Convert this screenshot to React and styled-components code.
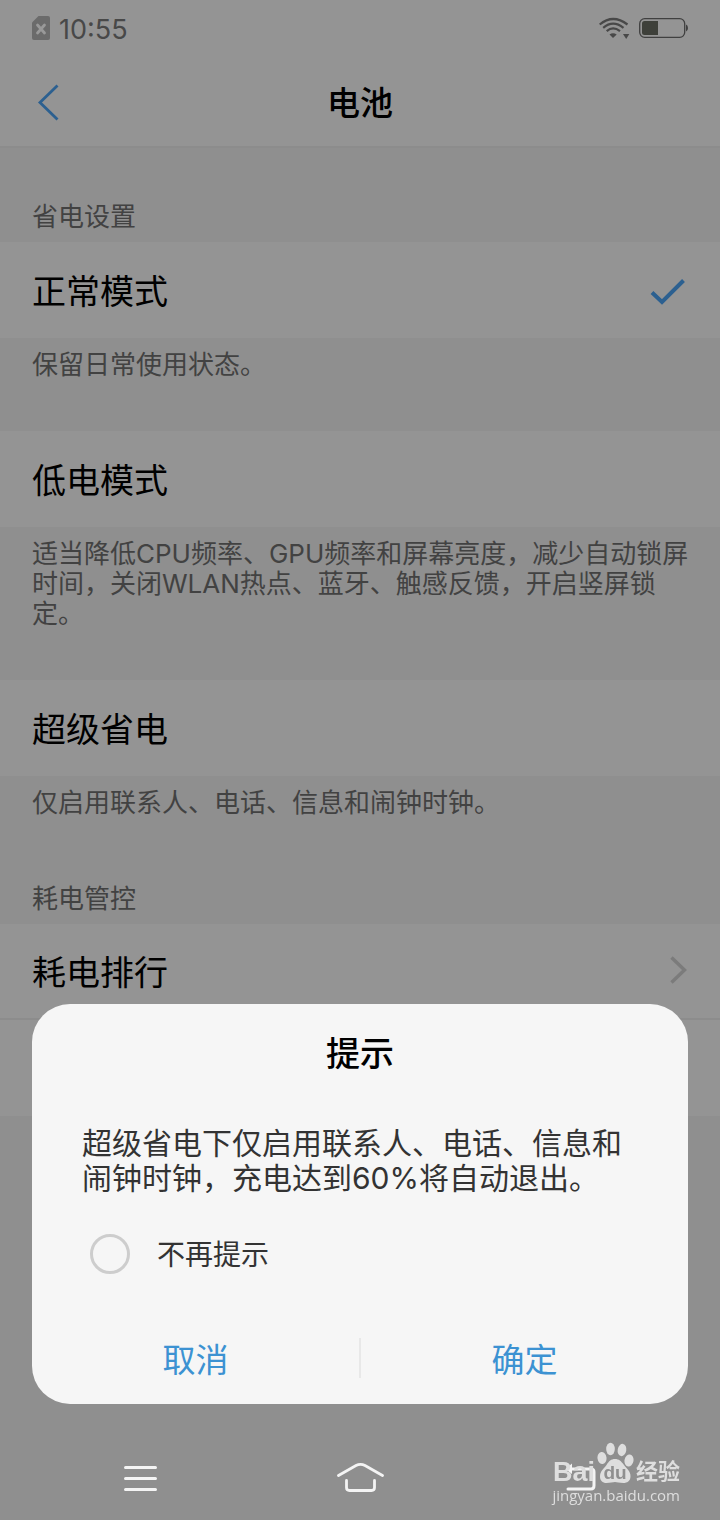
import React, { useState } from "react";
import styled, { createGlobalStyle } from "styled-components";

const GlobalStyle = createGlobalStyle`
  *, *::before, *::after { box-sizing: border-box; }
  body {
    margin: 0;
    background: #8f8f8f;
    font-family: Inter, "Noto Sans CJK SC", sans-serif;
  }
  button {
    border: 0;
    padding: 0;
    background: none;
    font: inherit;
    color: inherit;
    cursor: pointer;
  }
`;

const Page = styled.div`
  min-height: 100vh;
  background: #8f8f8f;
`;

const TopArea = styled.div`
  background: #949494;
  border-bottom: 2px solid #8c8c8c;
`;

const StatusBar = styled.div`
  display: flex;
  align-items: center;
  justify-content: space-between;
  height: 56px;
  padding: 0 32px;
  color: #484848;
`;

const StatusGroup = styled.div`
  display: flex;
  align-items: center;
  gap: 9px;
`;

const Clock = styled.time`
  font-size: 27px;
  line-height: 32px;
  padding-top: 4px;
`;

const Header = styled.header`
  display: grid;
  grid-template-columns: 64px 1fr 64px;
  align-items: center;
  height: 90px;
  padding: 4px 16px 0;
`;

const BackButton = styled.button`
  display: flex;
  align-items: center;
  justify-content: center;
  height: 64px;
`;

const HeaderTitle = styled.h1`
  margin: 0;
  text-align: center;
  font-size: 33px;
  line-height: 40px;
  font-weight: 500;
  color: #000;
`;

const SectionTitle = styled.h2`
  margin: 0;
  padding: 54px 32px 10px;
  font-size: 26px;
  line-height: 30px;
  font-weight: 400;
  color: #424242;
`;

const Group = styled.section`
  margin-bottom: ${(p) => (p.$last ? "0" : "39px")};
`;

const Row = styled.button`
  display: flex;
  align-items: center;
  justify-content: space-between;
  width: 100%;
  height: 96px;
  padding: 0 32px;
  background: #949494;
  border-bottom: ${(p) => (p.$divided ? "2px solid #8c8c8c" : "0")};
  text-align: left;
  color: #000;
`;

const RowLabel = styled.span`
  padding-top: 4px;
  font-size: 34px;
  line-height: 40px;
`;

const Description = styled.p`
  margin: 0;
  padding: 12px 28px 12px 32px;
  font-size: 26px;
  line-height: 30px;
  color: #424242;
`;

const Overlay = styled.div`
  position: fixed;
  inset: 0;
  display: flex;
  flex-direction: column;
  justify-content: flex-end;
`;

const Dialog = styled.div`
  margin: 0 32px 32px;
  padding: 30px 0 16px;
  border-radius: 38px;
  background: #f6f6f6;
`;

const DialogTitle = styled.h2`
  margin: 0 0 52px;
  text-align: center;
  font-size: 34px;
  line-height: 40px;
  font-weight: 500;
  color: #000;
`;

const DialogText = styled.p`
  margin: 0;
  padding: 0 50px;
  font-size: 30px;
  line-height: 35px;
  color: #333;
`;

const CheckRow = styled.label`
  display: flex;
  align-items: center;
  gap: 27px;
  margin: 38px 58px 0;
`;

const CheckText = styled.span`
  padding-top: 2px;
  font-size: 28px;
  line-height: 38px;
  color: #333;
`;

const CheckInput = styled.input`
  appearance: none;
  width: 40px;
  height: 40px;
  margin: 0;
  border: 3px solid #cdcdcd;
  border-radius: 50%;
  &:checked {
    border-color: #3c96d8;
    background: #3c96d8;
  }
`;

const DialogActions = styled.div`
  display: flex;
  align-items: center;
  margin-top: 54px;
`;

const ActionButton = styled.button`
  flex: 1;
  height: 60px;
  padding-top: 4px;
  font-size: 33px;
  line-height: 40px;
  color: #3c92d2;
`;

const ActionDivider = styled.div`
  width: 2px;
  height: 40px;
  background: #e8e8e8;
`;

const NavBar = styled.nav`
  position: relative;
  display: flex;
  height: 84px;
  padding: 0 30px;
`;

const NavButton = styled.button`
  flex: 1;
  display: flex;
  align-items: center;
  justify-content: center;
`;

const Watermark = styled.div`
  position: absolute;
  right: 40px;
  bottom: 16px;
  display: flex;
  flex-direction: column;
  align-items: flex-end;
  color: #dedede;
`;

const WatermarkLogo = styled.div`
  display: flex;
  align-items: flex-end;
  gap: 2px;
  padding-bottom: 2px;
`;

const WatermarkBai = styled.span`
  font-family: "Liberation Sans", sans-serif;
  font-size: 27px;
  line-height: 24px;
  font-weight: 700;
`;

const WatermarkName = styled.span`
  font-size: 22px;
  line-height: 26px;
  font-weight: 700;
`;

const WatermarkUrl = styled.span`
  font-family: "Open Sans", sans-serif;
  font-size: 15px;
  line-height: 18px;
`;

const PawText = styled.text`
  font-family: "Liberation Sans", sans-serif;
  font-size: 19px;
  font-weight: 700;
  fill: #8f8f8f;
`;

const SimIcon = () => (
  <svg width="18" height="24" viewBox="0 0 18 24" aria-hidden="true">
    <path d="M6.500 0H16a2 2 0 0 1 2 2V22a2 2 0 0 1-2 2H2a2 2 0 0 1-2-2V6.500Z" fill="#6b6b6b" />
    <path d="M5.500 9L12.500 17M12.500 9L5.500 17" stroke="#999" strokeWidth="2.800" strokeLinecap="round" />
  </svg>
);

const WifiIcon = () => (
  <svg width="31" height="22" viewBox="0 0 31 22" fill="none" aria-hidden="true">
    <g stroke="#484848" strokeWidth="2.200">
      <path d="M0.700 7.500Q14 -3.500 28.500 7.500" />
      <path d="M4.200 10.800Q14 2.600 24.500 10.800" />
      <path d="M7.700 14.200Q14 8.700 21 14.200" />
    </g>
    <path d="M10.500 17.500Q14 15 17.700 17.500L14 21Z" fill="#484848" />
    <path d="M24 17H30.300L27.200 22Z" fill="#484848" />
  </svg>
);

const BatteryIcon = () => (
  <svg width="49" height="20" viewBox="0 0 49 20" aria-hidden="true">
    <rect x="0.700" y="0.700" width="45" height="18.600" rx="5" fill="none" stroke="#404040" strokeWidth="1.300" />
    <rect x="3" y="3" width="16" height="14" rx="2.500" fill="#3e403a" />
    <rect x="12" y="3" width="7" height="14" fill="#3e403a" />
    <path d="M47 6.500Q49 7 49 10T47 13.500Z" fill="#404040" />
  </svg>
);

const BackIcon = () => (
  <svg width="22" height="38" viewBox="0 0 22 38" fill="none" aria-hidden="true">
    <path d="M20.500 1.500L3 18.500L20.500 35.500" stroke="#2c6090" strokeWidth="2.800" />
  </svg>
);

const CheckIcon = () => (
  <svg width="38" height="32" viewBox="0 0 38 32" fill="none" aria-hidden="true">
    <path d="M2 18.500L12 28L33.500 6.500" stroke="#2c6090" strokeWidth="4" />
  </svg>
);

const ChevronIcon = () => (
  <svg width="18" height="30" viewBox="0 0 18 30" fill="none" aria-hidden="true">
    <path d="M1.500 1.500L14.500 14L1.500 26.500" stroke="#7b7b7b" strokeWidth="3.400" />
  </svg>
);

const MenuIcon = () => (
  <svg width="34" height="28" viewBox="0 0 34 28" aria-hidden="true">
    <path d="M2.500 3.500H32.500M2.500 14.500H32.500M2.500 25.500H32.500" stroke="#f4f4f4" strokeWidth="3" strokeLinecap="round" />
  </svg>
);

const HomeIcon = () => (
  <svg width="48" height="32" viewBox="0 0 48 32" fill="none" aria-hidden="true">
    <g stroke="#f4f4f4" strokeWidth="2.800" strokeLinecap="round">
      <path d="M2.500 13.500L20 3.600Q24.500 1.200 29 3.600L46.500 13.500" />
      <path d="M10.500 18.500V25.500Q10.500 28.500 13.500 28.500H35.500Q38.500 28.500 38.500 25.500V18.500" />
    </g>
  </svg>
);

const ReturnIcon = () => (
  <svg width="34" height="32" viewBox="0 0 34 32" fill="none" aria-hidden="true">
    <path d="M9 1.500L2.500 7L9 12Z" fill="#f4f4f4" />
    <path d="M5 7H28Q31 7 31 10V23.500Q31 27 28 27H5" stroke="#f4f4f4" strokeWidth="3" strokeLinecap="round" />
  </svg>
);

const PawLogo = () => (
  <svg width="37" height="42" viewBox="0 0 37 42" aria-hidden="true">
    <g fill="#dedede">
      <ellipse cx="5" cy="16" rx="4.500" ry="6" transform="rotate(-8 5 16)" />
      <ellipse cx="13.500" cy="7" rx="4.300" ry="6.200" />
      <ellipse cx="25" cy="8" rx="4.300" ry="6.200" transform="rotate(10 25 8)" />
      <ellipse cx="32" cy="18.500" rx="4.500" ry="6" transform="rotate(10 32 18.500)" />
      <path d="M18 17C22 17 24 19 27 23C30 27 33.500 29 33.500 34.500C33.500 39 30 41 26.500 41C22 41 20 40 18 40C16 40 13 41 9.500 41C5.500 41 3 38.500 3 34.500C3 29 6.500 27 9.500 23C12 19 14 17 18 17Z" />
    </g>
    <PawText x="18" y="37" textAnchor="middle">du</PawText>
  </svg>
);

const MODES = [
  { name: "正常模式", description: "保留日常使用状态。" },
  {
    name: "低电模式",
    description:
      "适当降低CPU频率、GPU频率和屏幕亮度，减少自动锁屏时间，关闭WLAN热点、蓝牙、触感反馈，开启竖屏锁定。",
  },
  { name: "超级省电", description: "仅启用联系人、电话、信息和闹钟时钟。" },
];

export default function App() {
  const [skipPrompt, setSkipPrompt] = useState(false);
  return (
    <>
      <GlobalStyle />
      <Page>
        <TopArea>
          <StatusBar>
            <StatusGroup>
              <SimIcon />
              <Clock>10:55</Clock>
            </StatusGroup>
            <StatusGroup>
              <WifiIcon />
              <BatteryIcon />
            </StatusGroup>
          </StatusBar>
          <Header>
            <BackButton aria-label="返回">
              <BackIcon />
            </BackButton>
            <HeaderTitle>电池</HeaderTitle>
          </Header>
        </TopArea>
        <main>
          <SectionTitle>省电设置</SectionTitle>
          {MODES.map((mode, i) => (
            <Group key={mode.name} $last={i === MODES.length - 1}>
              <Row>
                <RowLabel>{mode.name}</RowLabel>
                {i === 0 && <CheckIcon />}
              </Row>
              <Description>{mode.description}</Description>
            </Group>
          ))}
          <SectionTitle>耗电管控</SectionTitle>
          <Row $divided>
            <RowLabel>耗电排行</RowLabel>
            <ChevronIcon />
          </Row>
          <Row aria-label="更多" />
        </main>
      </Page>
      <Overlay>
        <Dialog role="dialog" aria-labelledby="dialog-title">
          <DialogTitle id="dialog-title">提示</DialogTitle>
          <DialogText>超级省电下仅启用联系人、电话、信息和闹钟时钟，充电达到60%将自动退出。</DialogText>
          <CheckRow htmlFor="skip-prompt">
            <CheckInput
              id="skip-prompt"
              type="checkbox"
              checked={skipPrompt}
              onChange={(e) => setSkipPrompt(e.target.checked)}
            />
            <CheckText>不再提示</CheckText>
          </CheckRow>
          <DialogActions>
            <ActionButton>取消</ActionButton>
            <ActionDivider />
            <ActionButton>确定</ActionButton>
          </DialogActions>
        </Dialog>
        <NavBar>
          <NavButton aria-label="菜单">
            <MenuIcon />
          </NavButton>
          <NavButton aria-label="主页">
            <HomeIcon />
          </NavButton>
          <NavButton aria-label="后退">
            <ReturnIcon />
          </NavButton>
          <Watermark>
            <WatermarkLogo>
              <WatermarkBai>Bai</WatermarkBai>
              <PawLogo />
              <WatermarkName>经验</WatermarkName>
            </WatermarkLogo>
            <WatermarkUrl>jingyan.baidu.com</WatermarkUrl>
          </Watermark>
        </NavBar>
      </Overlay>
    </>
  );
}
